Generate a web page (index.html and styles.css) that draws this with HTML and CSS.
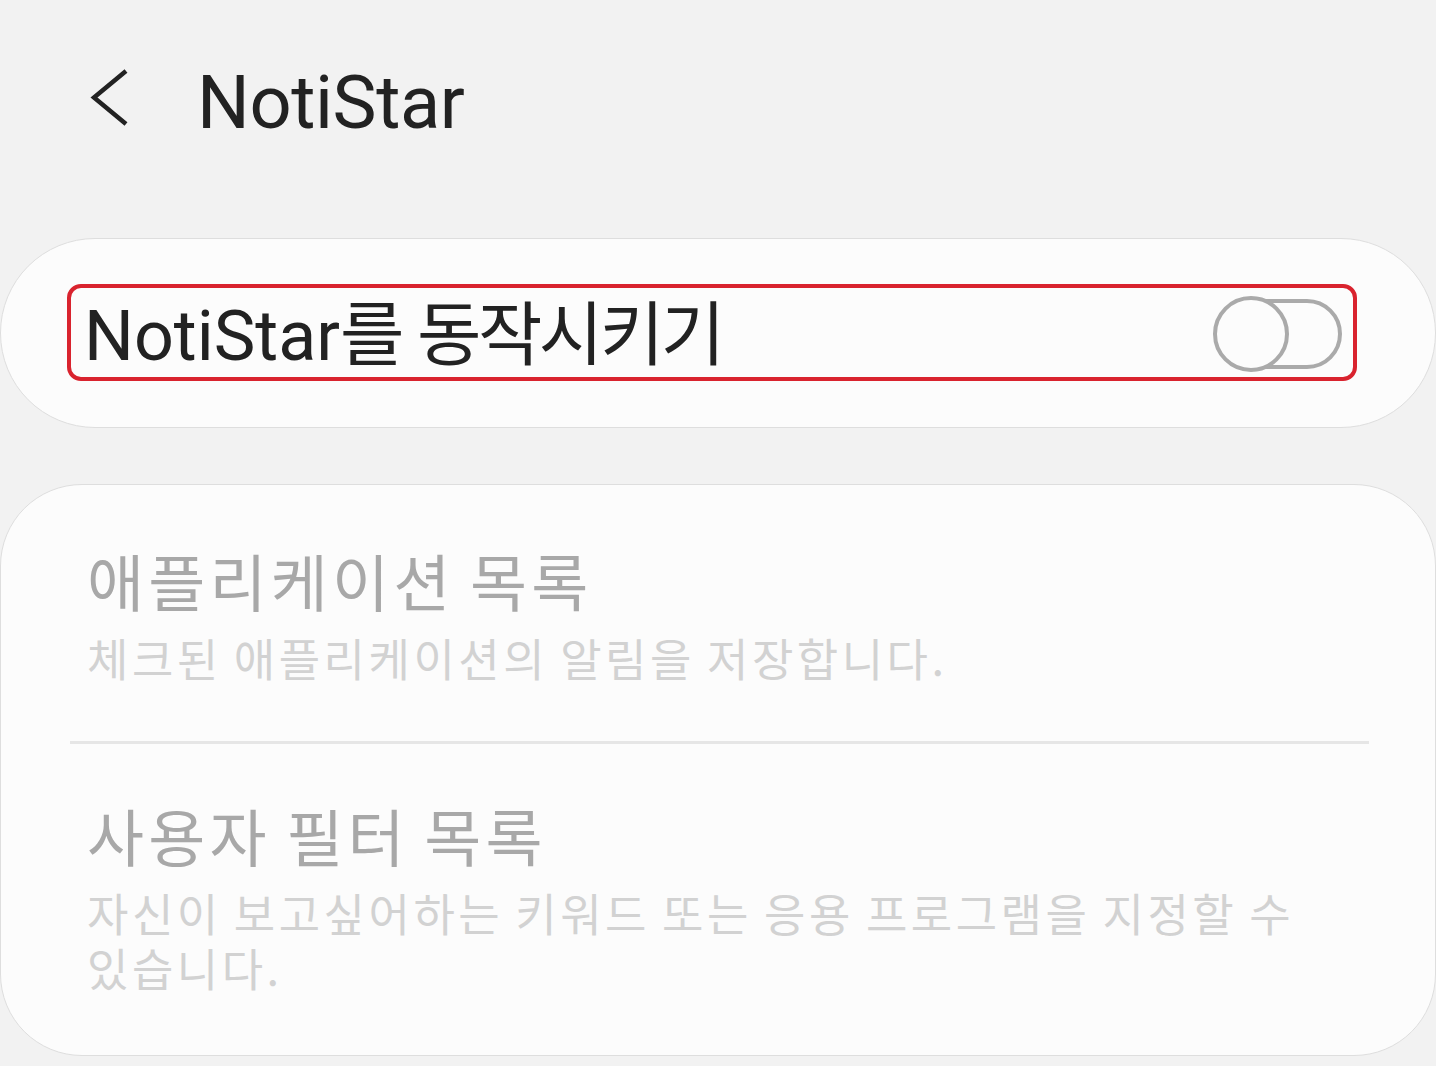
FILE: index.html
```html
<!DOCTYPE html>
<html lang="ko">
<head>
<meta charset="utf-8">
<link rel="stylesheet" href="styles.css">
</head>
<body>
<div class="page">
  <header class="header">
    <svg class="back" width="44" height="100" viewBox="0 0 44 100">
      <path d="M38 18 L6 44.5 L38 71" fill="none" stroke="#222" stroke-width="4.5" stroke-linecap="butt" stroke-linejoin="miter"/>
    </svg>
    <h1 class="title">NotiStar</h1>
  </header>

  <section class="card card-main">
    <div class="switch-row">
      <span class="switch-label">NotiStar<span class="ko">를 동작시키기</span></span>
      <svg class="toggle" width="132" height="78" viewBox="0 0 132 78">
        <rect x="10" y="6" width="119" height="66" rx="33" fill="none" stroke="#aaaaaa" stroke-width="4"/>
        <circle cx="40" cy="39" r="36" fill="#fcfcfc" stroke="#aaaaaa" stroke-width="4"/>
      </svg>
    </div>
  </section>

  <section class="card card-list">
    <div class="item item-first">
      <div class="item-title">애플리케이션 목록</div>
      <div class="item-sub">체크된 애플리케이션의 알림을 저장합니다.</div>
    </div>
    <div class="divider"></div>
    <div class="item item-second">
      <div class="item-title">사용자 필터 목록</div>
      <div class="item-sub">자신이 보고싶어하는 키워드 또는 응용 프로그램을 지정할 수 있습니다.</div>
    </div>
  </section>
</div>
</body>
</html>
```

FILE: styles.css
```css
* { box-sizing: border-box; }

html, body {
  margin: 0;
  padding: 0;
  background: #f2f2f2;
}

body {
  font-family: Roboto, "Noto Sans CJK KR", sans-serif;
  color: #222222;
  width: 1436px;
  height: 1066px;
  overflow: hidden;
}

.header {
  display: flex;
  align-items: center;
  padding: 53px 0 0 88px;
  height: 153px;
  margin-bottom: 85px;
}

.back {
  display: block;
  flex: none;
}

.title {
  margin: 0 0 0 65px;
  font-family: Roboto, sans-serif;
  font-weight: 400;
  font-size: 74px;
  line-height: 100px;
  letter-spacing: -0.4px;
  color: #222222;
}

.card {
  background: #fcfcfc;
  border: 1px solid #dedede;
}

.card-main {
  height: 190px;
  border-radius: 95px;
  padding: 45px 78px 46px 66px;
}

.switch-row {
  height: 97px;
  border: 4px solid #d9232e;
  border-radius: 14px;
  display: flex;
  align-items: center;
  justify-content: space-between;
  padding: 0 10px 0 13px;
}

.switch-label {
  font-family: Roboto, "Noto Sans CJK KR", sans-serif;
  font-size: 70px;
  line-height: 80px;
  color: #222222;
  white-space: nowrap;
}

.ko {
  font-family: "Noto Sans CJK KR", sans-serif;
  letter-spacing: -3.5px;
}

.toggle {
  display: block;
  flex: none;
  margin-top: 2px;
}

.card-list {
  margin-top: 56px;
  height: 572px;
  border-radius: 82px;
  padding: 0 66px 0 0;
}

.item {
  padding-left: 86px;
  display: flex;
  flex-direction: column;
}

.item-first {
  padding-top: 50px;
  padding-bottom: 56px;
}

.item-second {
  padding-top: 46px;
}

.item-title {
  font-family: "Noto Sans CJK KR", sans-serif;
  font-size: 62px;
  line-height: 90px;
  letter-spacing: 4.2px;
  word-spacing: -6px;
  color: #a8a8a8;
}

.item-sub {
  font-family: "Noto Sans CJK KR", sans-serif;
  font-size: 45px;
  line-height: 55px;
  letter-spacing: 3.5px;
  word-spacing: -4px;
  word-break: keep-all;
  color: #d2d2d2;
  margin-top: 5px;
}

.divider {
  height: 3px;
  background: #e6e6e6;
  margin-left: 69px;
}
```
